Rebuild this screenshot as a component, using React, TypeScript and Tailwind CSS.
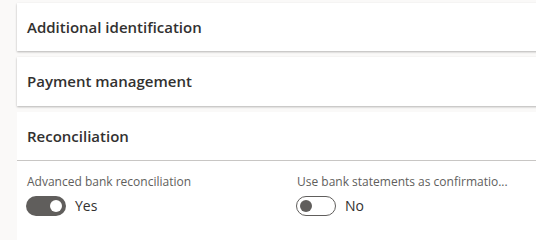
import React from "react";

function Toggle({ on }: { on: boolean }) {
	return (
		<div
			className={
				on
					? "w-[40px] h-[20px] rounded-full bg-[#605e5c] flex items-center justify-end px-[4px]"
					: "w-[40px] h-[20px] rounded-full border border-[#605e5c] bg-white flex items-center justify-start px-[3px]"
			}
		>
			<div
				className={
					on
						? "w-[12px] h-[12px] rounded-full bg-white"
						: "w-[12px] h-[12px] rounded-full bg-[#605e5c]"
				}
			/>
		</div>
	);
}

function Field({ label, on }: { label: string; on: boolean }) {
	return (
		<div className="w-[270px] shrink-0 flex flex-col">
			<div className="text-[12px] leading-[16px] text-[#605e5c] whitespace-nowrap">
				{label}
			</div>
			<div className="mt-[6px] -ml-[1px] flex items-center gap-[9px]">
				<Toggle on={on} />
				<span className="text-[14px] leading-[20px] text-[#323130]">
					{on ? "Yes" : "No"}
				</span>
			</div>
		</div>
	);
}

export default function App() {
	return (
		<div
			className="w-[536px] h-[240px] bg-[#faf9f8] overflow-hidden pt-[3px] pl-[17px]"
			style={{ fontFamily: '"Open Sans", "Noto Sans", sans-serif' }}
		>
			<div className="w-[540px] flex flex-col gap-[6px]">
				<div className="h-[48px] bg-white shadow-[0_1px_2px_rgba(0,0,0,0.28)] flex items-center px-[10px]">
					<h2 className="text-[15px] font-semibold text-[#323130]">
						Additional identification
					</h2>
				</div>

				<div className="h-[49px] bg-white shadow-[0_1px_2px_rgba(0,0,0,0.28)] flex items-center px-[10px]">
					<h2 className="text-[15px] font-semibold text-[#323130]">
						Payment management
					</h2>
				</div>

				<div className="h-[200px] bg-white">
					<div className="h-[49px] border-b border-[#c8c6c4] flex items-center px-[10px]">
						<h2 className="text-[15px] font-semibold text-[#323130]">
							Reconciliation
						</h2>
					</div>
					<div className="flex pt-[13px] px-[10px]">
						<Field label="Advanced bank reconciliation" on={true} />
						<Field label="Use bank statements as confirmatio..." on={false} />
					</div>
				</div>
			</div>
		</div>
	);
}
